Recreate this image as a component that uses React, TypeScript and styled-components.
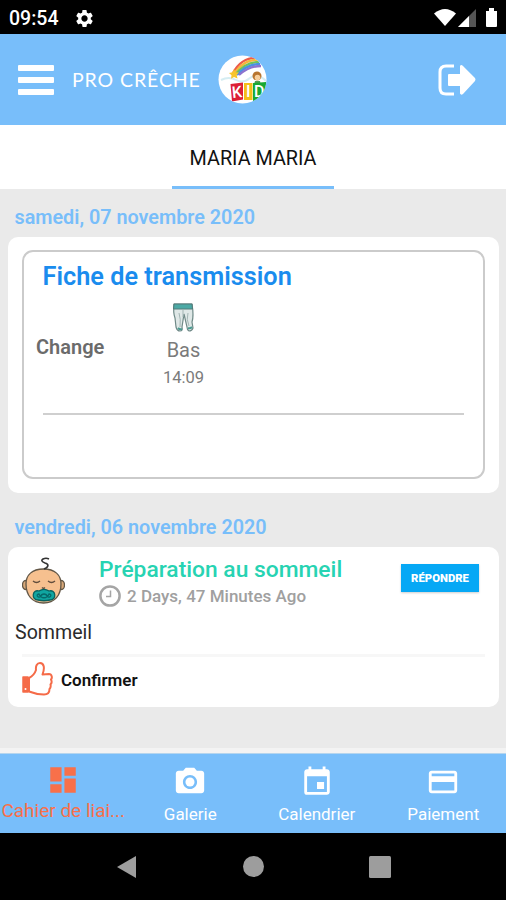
import React from "react";
import styled, { createGlobalStyle } from "styled-components";
import { MdDashboard, MdPhotoCamera, MdEvent, MdPayment, MdSettings } from "react-icons/md";

const GlobalStyle = createGlobalStyle`
  * { box-sizing: border-box; }
  body { margin: 0; background: #000; font-family: Roboto, "Liberation Sans", sans-serif; }
`;

const Screen = styled.div`
  width: 506px;
  height: 900px;
  display: flex;
  flex-direction: column;
  overflow: hidden;
  background: #eaeaea;
`;

const StatusBar = styled.div`
  height: 34px;
  flex: none;
  display: flex;
  align-items: center;
  padding: 2px 8px 0 9px;
  background: #000;
  color: #fff;
`;

const Clock = styled.span`
  font-size: 19.5px;
  font-weight: 500;
  width: 65px;
`;

const StatusIcons = styled.div`
  margin-left: auto;
  display: flex;
  align-items: center;
`;

const Header = styled.header`
  height: 91px;
  flex: none;
  display: flex;
  align-items: center;
  padding: 0 30px 0 18px;
  background: #78befa;
`;

const Burger = styled.div`
  width: 36px;
  display: grid;
  gap: 6px;
  i { height: 6px; background: #fff; border-radius: 1px; }
`;

const Brand = styled.span`
  width: 128px;
  margin: 0 18px 0 18px;
  font-family: Lato, sans-serif;
  font-size: 19.5px;
  letter-spacing: 0.9px;
  line-height: 24px;
  white-space: nowrap;
  color: #fff;
`;

const Logout = styled.svg`
  margin-left: auto;
`;

const TabBar = styled.nav`
  height: 64px;
  flex: none;
  display: flex;
  justify-content: center;
  background: #fff;
`;

const Tab = styled.div`
  width: 162px;
  border-bottom: 3px solid #78befa;
  line-height: 67px;
  text-align: center;
  white-space: nowrap;
  font-size: 19.8px;
  color: #111;
`;

const Feed = styled.main`
  flex: 1;
  padding: 0 7px 0 8px;
  border-bottom: 5px solid #f3f3f3;
`;

const DateHeading = styled.h2<{ $gap: number }>`
  margin: ${(p) => p.$gap}px 0 0 6.5px;
  height: 35px;
  line-height: 32px;
  font-size: 19.8px;
  font-weight: 600;
  color: #78befa;
`;

const Card = styled.section<{ $height: number }>`
  height: ${(p) => p.$height}px;
  border-radius: 10px;
  background: #fff;
`;

const TransmissionCard = styled(Card)`
  padding: 13px 14px 14px;
`;

const Sheet = styled.div`
  height: 229px;
  border: 2px solid #cbcbcb;
  border-radius: 11px;
  padding: 9px 19px 0 19px;
`;

const SheetTitle = styled.h3`
  margin: 0 0 0 -0.5px;
  font-size: 25.3px;
  line-height: 32px;
  font-weight: 600;
  color: #1a8cee;
`;

const SheetRow = styled.div`
  display: flex;
  height: 122px;
  border-bottom: 2px solid #cfcfcf;
`;

const RowLabel = styled.span`
  width: 110px;
  margin-left: -7px;
  padding-top: 41px;
  font-size: 20px;
  line-height: 26px;
  font-weight: 600;
  color: #6b6b6b;
`;

const Entry = styled.div`
  width: 75px;
  padding-top: 9px;
  display: flex;
  flex-direction: column;
  align-items: center;
  color: #7b7b7b;
`;

const EntryName = styled.span`
  margin-top: 5px;
  font-size: 20px;
  line-height: 26px;
`;

const EntryTime = styled.span`
  font-size: 16.5px;
  line-height: 30px;
`;

const NoteCard = styled(Card)`
  padding: 10px 14px 0 14px;
`;

const NoteHead = styled.div`
  display: flex;
  align-items: flex-start;
  height: 60px;
`;

const NoteInfo = styled.div`
  margin-left: 34px;
`;

const NoteTitle = styled.h3`
  margin: -1px 0 0;
  font-size: 22.8px;
  line-height: 27px;
  font-weight: 500;
  white-space: nowrap;
  color: #27d3b2;
`;

const NoteTime = styled.div`
  display: flex;
  align-items: center;
  gap: 6px;
  height: 25px;
  font-size: 17px;
  font-weight: 500;
  white-space: nowrap;
  color: #a0a0a0;
`;

const ReplyButton = styled.button`
  margin: 7px 6px 0 auto;
  width: 78px;
  height: 28px;
  flex: none;
  padding: 0;
  border: 0;
  background: #06a8f5;
  box-shadow: 0 1px 2px #0003;
  font: 900 11.3px Roboto, sans-serif;
  color: #fff;
`;

const NoteBody = styled.p`
  margin: 0 0 0 -7px;
  height: 37px;
  line-height: 31px;
  font-size: 19.6px;
  color: #2b2b2b;
`;

const NoteActions = styled.div`
  border-top: 3px solid #f7f7f7;
  height: 47px;
  display: flex;
  align-items: center;
  gap: 8px;
  font-size: 17px;
  line-height: 20px;
  font-weight: 600;
  color: #111;
`;

const ActionLabel = styled.span`
  padding-top: 2px;
`;

const BottomNav = styled.nav`
  height: 80px;
  flex: none;
  display: grid;
  grid-template-columns: repeat(4, 1fr);
  border-top: 1px solid #b5d5ee;
  background: #78befa;
`;

const NavItem = styled.div<{ $active?: boolean }>`
  display: flex;
  flex-direction: column;
  align-items: center;
  padding-top: ${(p) => (p.$active ? 9 : 11)}px;
  padding-left: ${(p) => (p.$active ? 0 : 1)}px;
  white-space: nowrap;
  line-height: ${(p) => (p.$active ? 28 : 30)}px;
  font-size: ${(p) => (p.$active ? 19 : 17)}px;
  color: ${(p) => (p.$active ? "#f8704a" : "#fff")};
  svg { flex: none; }
`;

const SystemNav = styled.div`
  height: 67px;
  flex: none;
  display: flex;
  justify-content: center;
  align-items: center;
  gap: 105.5px;
  padding-left: 1px;
  background: #000;
`;

const KidLogo = () => (
  <svg width="49" height="49" viewBox="0 0 49 49">
    <clipPath id="disc"><circle cx="24.5" cy="24.5" r="24" /></clipPath>
    <g clipPath="url(#disc)">
      <rect width="49" height="49" fill="#fff" />
      <path d="M3 25q8-4 15 0t14-2 16 3" fill="none" stroke="#d5edf2" strokeWidth="2" />
      <g fill="none" strokeWidth="2.3">
        <path d="M15 18Q24 2 39 3" stroke="#ec5b49" />
        <path d="M16 19Q26 4 40 5" stroke="#f8b53c" />
        <path d="M17 20Q27 7 41 7" stroke="#71c35a" />
        <path d="M19 20Q29 9 42 9" stroke="#4a91e2" />
        <path d="M21 20Q31 11 43 11" stroke="#8c73cf" />
      </g>
      <path d="m16 14 1.6 3.2 3.4.2-2.3 2.5.8 3.7-3.5-1.6-3 1.8.5-3.6-2.5-2.3 3.4-.7z" fill="#f8c52b" />
      <circle cx="39" cy="21" r="4.5" fill="#b8752f" />
      <circle cx="39.5" cy="22.5" r="2.8" fill="#f7cf9c" />
      <path d="M36 30l1-4h5l1 4z" fill="#4f9e55" />
      <path d="M12.500 29l12.500-1.500v17l-11 2z" fill="#dc2036" />
      <path d="M26 28h8.500v17H26z" fill="#f5bf18" />
      <path d="M35 28l13-1v19H35z" fill="#18a832" />
      <g fill="#fff" fontFamily="Roboto, sans-serif" fontWeight="500" fontSize="16">
        <text x="14" y="42.5" transform="rotate(-6 19 37)">K</text>
        <text x="28" y="42">I</text>
        <text x="36" y="42">D</text>
      </g>
    </g>
  </svg>
);

const Tights = () => (
  <svg width="23" height="30" viewBox="0 0 23 30">
    <path d="M2 2h18q2 12 0 18l1 6q-1 3-4 3-2-1-2-4l-3-13-2 13q1 4-2 4-3 0-4-4L3 16q-2-5-1-14z" fill="#dfe8e7" stroke="#708a88" strokeWidth="1.200" />
    <path d="M2 2h18l.5 5H1.5z" fill="#4ba9a5" stroke="#527a78" />
    <path d="M11 8v7M7 11q2 6 1 14M16 11q-2 6 1 13" fill="none" stroke="#a3b5b4" strokeWidth="1" />
    <path d="M6 26q2 2 4 1M16 26q2 1 4-1" fill="none" stroke="#4a9a91" strokeWidth="2" />
  </svg>
);

const BabyFace = () => (
  <svg width="43" height="47" viewBox="0 0 43 47" fill="none" stroke="#625747" strokeWidth="1.3">
    <ellipse cx="3.500" cy="28" rx="3" ry="4.500" fill="#d9a878" />
    <ellipse cx="39.500" cy="28" rx="3" ry="4.500" fill="#d9a878" />
    <path d="M21.500 12C10 12 4 18 4 27c0 11 6 19 17.500 19S39 38 39 27c0-9-6-15-17.500-15z" fill="#f6c08f" />
    <path d="M22 12c5-2 5-5 1-6q-5-2-2-4 3-1.500 6 0" stroke="#333" strokeWidth="1.600" />
    <path d="M11 24q3.500 3 7 0M26 24q3.500 3 7 0M20 30.500q1.500 1.500 3 0" stroke="#604c3b" />
    <path d="M17 34c3-2 7-2 10 0 7-2 8 9 1 9-4 1-8 1-12 0-7 0-6-11 1-9z" fill="#10a6a1" stroke="#086260" />
    <path d="M17 37c-3 0-2 4 1 3 2-4 6-4 8 0 3 1 4-3 1-3-2 5-8 5-10 0z" stroke="#06696a" />
  </svg>
);

const ClockIcon = () => (
  <svg width="22" height="22" viewBox="0 0 22 22" fill="none" stroke="#a5a5a5">
    <circle cx="11" cy="11" r="9.600" strokeWidth="2.500" />
    <path d="M11.500 5.500v6H7" strokeWidth="1.500" />
  </svg>
);

const ThumbUp = () => (
  <svg width="31" height="34" viewBox="0 0 31 34" fill="none" stroke="#f56b48" strokeWidth="2" strokeLinejoin="round" strokeLinecap="round">
    <path d="M1 15h5v15H1z" fill="#f56b48" strokeWidth="1.500" />
    <circle cx="3.500" cy="27" r="1" fill="#fff" stroke="none" />
    <path d="M7 16c4-2 6-5 7-8-.5-4 1-7 4-7 4 0 5 5 2.500 11.500L27 12c3 0 3.500 4 2 5.500 1 2 .5 4-.5 5 .5 2 0 3.500-1 4.500 0 3-1.500 5.500-5.500 5.500-6 0-10-1-15-3z" />
  </svg>
);

export default function App() {
  return (
    <Screen>
      <GlobalStyle />
      <StatusBar>
        <Clock>09:54</Clock>
        <MdSettings size={21} />
        <StatusIcons>
          <svg width="64" height="20" viewBox="0 0 64 20" fill="#fff">
            <path d="M0 5.500Q11-3.500 22 5.500L11 18z" />
            <path d="M42 1v18H24z" fill="#555" />
            <path d="M35 8v11H24z" />
            <path d="M52 3h3V0h5v3h3v15q0 1-1 1h-9q-1 0-1-1z" />
          </svg>
        </StatusIcons>
      </StatusBar>
      <Header>
        <Burger><i /><i /><i /></Burger>
        <Brand>PRO CRÊCHE</Brand>
        <KidLogo />
        <Logout width="38" height="32" viewBox="0 0 38 32">
          <path d="M16 2H8Q2 2 2 8v16q0 6 6 6h8" fill="none" stroke="#fff" strokeWidth="3" />
          <path d="M11 10h11V2q1-2 3 0l12 12q1 1.500 0 3L25 30q-2 1.500-3-.5V22H11q-1 0-1-1V11q0-1 1-1z" fill="#fff" />
        </Logout>
      </Header>
      <TabBar><Tab>MARIA MARIA</Tab></TabBar>
      <Feed>
        <DateHeading $gap={13}>samedi, 07 novembre 2020</DateHeading>
        <TransmissionCard $height={256}>
          <Sheet>
            <SheetTitle>Fiche de transmission</SheetTitle>
            <SheetRow>
              <RowLabel>Change</RowLabel>
              <Entry>
                <Tights />
                <EntryName>Bas</EntryName>
                <EntryTime>14:09</EntryTime>
              </Entry>
            </SheetRow>
          </Sheet>
        </TransmissionCard>
        <DateHeading $gap={19}>vendredi, 06 novembre 2020</DateHeading>
        <NoteCard $height={160}>
          <NoteHead>
            <BabyFace />
            <NoteInfo>
              <NoteTitle>Préparation au sommeil</NoteTitle>
              <NoteTime><ClockIcon />2 Days, 47 Minutes Ago</NoteTime>
            </NoteInfo>
            <ReplyButton>RÉPONDRE</ReplyButton>
          </NoteHead>
          <NoteBody>Sommeil</NoteBody>
          <NoteActions><ThumbUp /><ActionLabel>Confirmer</ActionLabel></NoteActions>
        </NoteCard>
      </Feed>
      <BottomNav>
        <NavItem $active><MdDashboard size={34} />Cahier de liai...</NavItem>
        <NavItem><MdPhotoCamera size={34} />Galerie</NavItem>
        <NavItem><MdEvent size={34} />Calendrier</NavItem>
        <NavItem><MdPayment size={34} />Paiement</NavItem>
      </BottomNav>
      <SystemNav>
        <svg width="21" height="24" viewBox="0 0 21 24"><path d="M20 1v22L1 12z" fill="#9d9d9d" /></svg>
        <svg width="21" height="21" viewBox="0 0 21 21"><circle cx="10.500" cy="10.500" r="10.500" fill="#9d9d9d" /></svg>
        <svg width="22" height="22" viewBox="0 0 22 22"><rect width="22" height="22" rx="1.500" fill="#9d9d9d" /></svg>
      </SystemNav>
    </Screen>
  );
}
